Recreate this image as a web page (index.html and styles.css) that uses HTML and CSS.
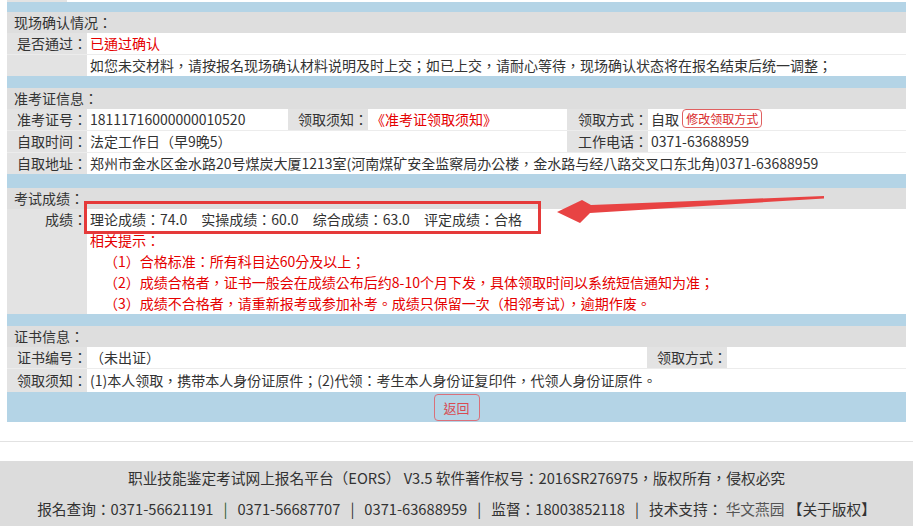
FILE: index.html
```html
<!DOCTYPE html>
<html lang="zh-TW">
<head>
  <meta charset="UTF-8" />
  <title>报名信息查询</title>
  <link rel="stylesheet" href="styles.css">
</head>
<body>
<div class="page">
  <div class="prev"><div class="prev-lbl"></div><div class="prev-val"></div></div>

  <div class="panel">
    <div class="band band-first"></div>

    <!-- 现场确认 -->
    <div class="sec">
      <div class="sec-title">现场确认情况：</div>
      <div class="rows">
        <div class="row cols-2">
          <div class="lbl">是否通过：</div>
          <div class="val red">已通过确认</div>
        </div>
        <div class="row cols-2">
          <div class="lbl"></div>
          <div class="val">如您未交材料，请按报名现场确认材料说明及时上交；如已上交，请耐心等待，现场确认状态将在报名结束后统一调整；</div>
        </div>
      </div>
    </div>

    <div class="band"></div>

    <!-- 准考证信息 -->
    <div class="sec">
      <div class="sec-title">准考证信息：</div>
      <div class="rows">
        <div class="row cols-6">
          <div class="lbl">准考证号：</div>
          <div class="val">18111716000000010520</div>
          <div class="lbl">领取须知：</div>
          <div class="val"><span class="red">《准考证领取须知》</span></div>
          <div class="lbl">领取方式：</div>
          <div class="val">自取 <span class="mini-btn">修改领取方式</span></div>
        </div>
        <div class="row cols-6">
          <div class="lbl">自取时间：</div>
          <div class="val span-3">法定工作日（早9晚5）</div>
          <div class="lbl">工作电话：</div>
          <div class="val">0371-63688959</div>
        </div>
        <div class="row cols-6">
          <div class="lbl">自取地址：</div>
          <div class="val span-5">郑州市金水区金水路20号煤炭大厦1213室(河南煤矿安全监察局办公楼，金水路与经八路交叉口东北角)0371-63688959</div>
        </div>
      </div>
    </div>

    <div class="band band-wide"></div>

    <!-- 考试成绩 -->
    <div class="sec">
      <div class="sec-title">考试成绩：</div>
      <div class="rows">
        <div class="row cols-2 row-tall">
          <div class="lbl">成绩：</div>
          <div class="val">
            <div class="scores">
              <span>理论成绩：74.0</span>
              <span>实操成绩：60.0</span>
              <span>综合成绩：63.0</span>
              <span>评定成绩：合格</span>
            </div>
            <div class="red">相关提示：</div>
            <div class="red tip">（1）合格标准：所有科目达60分及以上；</div>
            <div class="red tip">（2）成绩合格者，证书一般会在成绩公布后约8-10个月下发，具体领取时间以系统短信通知为准；</div>
            <div class="red tip">（3）成绩不合格者，请重新报考或参加补考。成绩只保留一次（相邻考试），逾期作废。</div>
          </div>
        </div>
      </div>
    </div>

    <div class="band"></div>

    <!-- 证书信息 -->
    <div class="sec">
      <div class="sec-title">证书信息：</div>
      <div class="rows">
        <div class="row cols-4">
          <div class="lbl">证书编号：</div>
          <div class="val">（未出证）</div>
          <div class="lbl">领取方式：</div>
          <div class="val"></div>
        </div>
        <div class="row cols-4 row-last">
          <div class="lbl">领取须知：</div>
          <div class="val span-3">(1)本人领取，携带本人身份证原件；(2)代领：考生本人身份证复印件，代领人身份证原件。</div>
        </div>
      </div>
    </div>

    <div class="band band-btn">
      <button type="button" class="back-btn">返回</button>
    </div>
  </div>

  <div class="rule"></div>

  <div class="footer">
    <p>职业技能鉴定考试网上报名平台（EORS） V3.5 软件著作权号：2016SR276975，版权所有，侵权必究</p>
    <p>报名查询：0371-56621191<span class="bar green">|</span>0371-56687707<span class="bar">|</span>0371-63688959<span class="bar">|</span>监督：18003852118<span class="bar">|</span>技术支持： <span class="vendor">华文燕园</span> 【关于版权】</p>
  </div>

  <!-- 标注 -->
  <div class="mark-box"></div>
  <svg class="mark-arrow" width="280" height="40" viewBox="0 0 280 40">
    <polygon points="274,6 274,8.5 40,23 30,33 7,22 32,10 41,15" fill="#e84343" />
  </svg>
</div>
</body>
</html>
```

FILE: styles.css
```css
body {
  margin: 0;
  background: #fff;
  font-family: "Noto Sans CJK TC", "Noto Sans CJK SC", sans-serif;
  font-size: 14px;
  color: #333;
}

.page {
  position: relative;
  width: 913px;
  height: 527px;
  overflow: hidden;
}

.prev {
  display: flex;
  height: 2px;
  margin-left: 7px;
  width: 899px;
}

.prev-lbl {
  width: 60px;
  background: #e3e3e3;
}

.panel {
  margin-left: 7px;
  width: 899px;
}

.band {
  height: 12px;
  background: #b4d4e6;
}

.band-first {
  height: 10px;
}

.band-wide {
  height: 14px;
}

.band-btn {
  height: 30px;
  display: flex;
  justify-content: center;
  align-items: center;
}

.sec-title {
  height: 21px;
  line-height: 21px;
  padding-left: 7px;
  background: #dedede;
}

.rows {
  display: flex;
  flex-direction: column;
  gap: 1px;
  background: #ececec;
}

.row {
  display: grid;
  height: 21px;
  line-height: 21px;
}

.cols-2 {
  grid-template-columns: 80px 1fr;
}

.cols-4 {
  grid-template-columns: 80px 560px 80px 1fr;
}

.cols-6 {
  grid-template-columns: 80px 201px 80px 199px 81px 1fr;
}

.row-tall {
  height: auto;
}

.row-last {
  height: 23px;
  line-height: 23px;
}

.lbl {
  background: #e3e3e3;
  text-align: right;
  white-space: nowrap;
}

.val {
  background: #fff;
  padding-left: 3px;
  white-space: nowrap;
  overflow: hidden;
}

.span-3 {
  grid-column: span 3;
}

.span-5 {
  grid-column: span 5;
}

.red {
  color: #e50000;
}

.mini-btn {
  display: inline-block;
  height: 17px;
  line-height: 17px;
  padding: 0 3px;
  border: 1px solid #e06060;
  border-radius: 4px;
  color: #d92b2b;
  font-size: 12px;
  vertical-align: 1px;
}

.scores span {
  margin-right: 11px;
}

.tip {
  padding-left: 14px;
}

.back-btn {
  width: 46px;
  height: 27px;
  padding: 0;
  border: 1px solid #d9707a;
  border-radius: 4px;
  background: transparent;
  color: #d84a52;
  font-family: inherit;
  font-size: 13px;
  cursor: pointer;
}

.rule {
  height: 1px;
  margin-top: 19px;
  background: #e2e2e2;
}

.footer {
  margin-top: 19px;
  padding-top: 1px;
  height: 64px;
  background: #dcdcdc;
  text-align: center;
  font-size: 14.7px;
}

.footer p {
  margin: 0;
  line-height: 31px;
}

.bar {
  margin: 0 10px;
}

.bar.green {
  color: #2f5f2f;
}

.vendor {
  color: #555;
}

.mark-box {
  position: absolute;
  left: 84px;
  top: 201px;
  width: 451px;
  height: 27px;
  border: 3px solid #e53a3a;
}

.mark-arrow {
  position: absolute;
  left: 550px;
  top: 190px;
}
```
